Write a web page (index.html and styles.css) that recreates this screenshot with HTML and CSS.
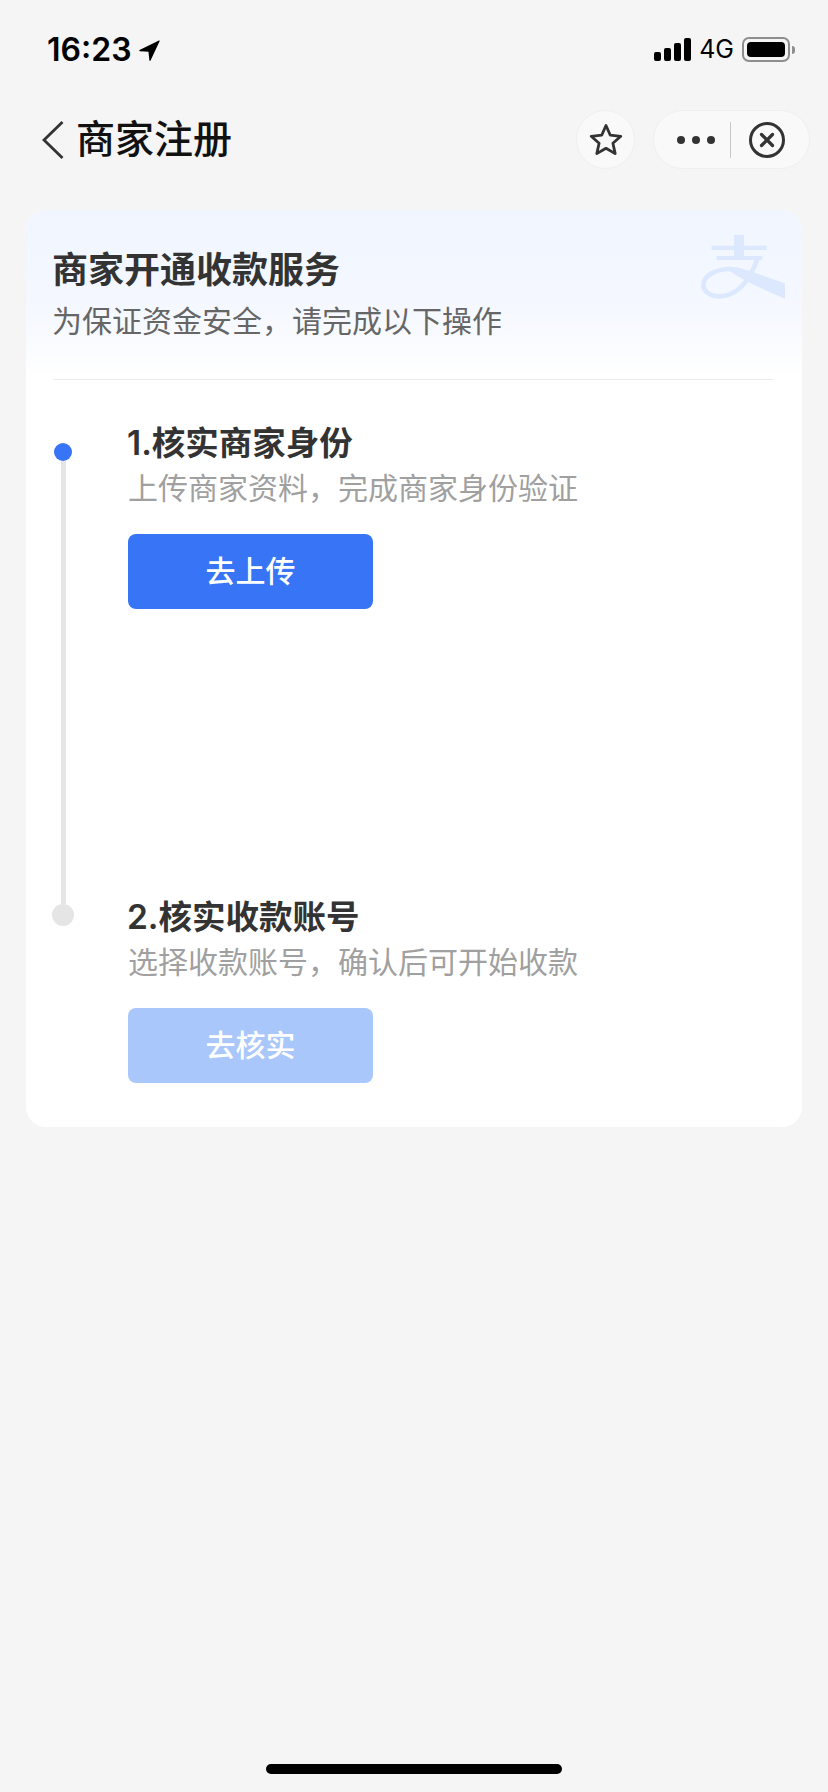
FILE: index.html
```html
<!DOCTYPE html>
<html lang="zh-CN">
<head>
  <meta charset="UTF-8"/>
  <meta name="viewport" content="width=device-width, initial-scale=1.0"/>
  <title>商家注册</title>
  <link rel="stylesheet" href="styles.css">
</head>
<body>
  <div class="page">
    <div class="status-bar">
      <div class="status-time">
        <span>16:23</span>
        <svg class="status-arrow" width="21" height="21" viewBox="0 0 20 20"><path d="M0.5 9.5 19 0.5c.5-.2.8.2.6.6L11 19.5c-.3.6-1 .5-1.100-.1L9 11.200 1 10.800c-.8-.1-1-.9-.5-1.300Z" fill="#000"/></svg>
      </div>
      <div class="status-right">
        <div class="signal">
          <i class="bar1"></i><i class="bar2"></i><i class="bar3"></i><i class="bar4"></i>
        </div>
        <span class="network">4G</span>
        <div class="battery"><div class="battery-level"></div></div>
        <div class="battery-nub"></div>
      </div>
    </div>

    <div class="nav-bar">
      <svg class="back-icon" width="22" height="38" viewBox="0 0 22 38"><path d="M20.500 1 2 19l18.500 18" fill="none" stroke="#333" stroke-width="2.800"/></svg>
      <h1 class="nav-title">商家注册</h1>
      <div class="nav-actions">
        <div class="round-btn">
          <svg width="36" height="36" viewBox="0 0 36 36"><path d="M18 3.500l4.300 9.700 10.500 1.100-7.900 7 2.300 10.300L18 26.300 8.800 31.600l2.300-10.300-7.900-7 10.500-1.100Z" fill="none" stroke="#333" stroke-width="2.800" stroke-linejoin="round"/></svg>
        </div>
        <div class="pill-btn">
          <div class="more-dots"><i></i><i></i><i></i></div>
          <div class="pill-sep"></div>
          <svg class="close-icon" width="38" height="38" viewBox="0 0 38 38"><circle cx="19" cy="19" r="16.500" fill="none" stroke="#333" stroke-width="3"/><path d="M13.500 13.500l11 11M24.500 13.500l-11 11" stroke="#333" stroke-width="3.200" stroke-linecap="round"/></svg>
        </div>
      </div>
    </div>

    <div class="card">
      <div class="card-head">
        <svg class="brand-mark" width="84" height="64" viewBox="298 105 252 192">
          <path d="M397 105h30v32h68v13h-68v18h55v12h-137v-12h52v-18h-67v-13h67Z" fill="#dce8fd"/>
          <path d="M468 175C445 240 410 289 352 289 322 289 305 272 305 255 305 226 345 207 385 207" fill="none" stroke="#dce8fd" stroke-width="14"/>
          <path d="M385 200C415 200 450 215 550 250V297C480 265 430 245 385 214Z" fill="#dce8fd"/>
        </svg>
        <h2 class="card-title">商家开通收款服务</h2>
        <p class="card-sub">为保证资金安全，请完成以下操作</p>
      </div>

      <div class="timeline">
        <div class="rail">
          <div class="dot dot-on"></div>
          <div class="rail-line"></div>
          <div class="dot dot-off"></div>
        </div>
        <div class="steps">
          <div class="step step-first">
            <div class="step-title">1.核实商家身份</div>
            <div class="step-desc">上传商家资料，完成商家身份验证</div>
            <button class="step-btn">去上传</button>
          </div>
          <div class="step">
            <div class="step-title">2.核实收款账号</div>
            <div class="step-desc">选择收款账号，确认后可开始收款</div>
            <button class="step-btn step-btn-off">去核实</button>
          </div>
        </div>
      </div>
    </div>

    <div class="home-indicator"></div>
  </div>
</body>
</html>
```

FILE: styles.css
```css
* {
  box-sizing: border-box;
}

body {
  margin: 0;
  background: #f5f5f5;
  font-family: Inter, 'Noto Sans CJK SC', sans-serif;
}

.page {
  height: 1792px;
  display: flex;
  flex-direction: column;
}

/* status bar */
.status-bar {
  height: 98px;
  padding: 37px 33px 0 47px;
  display: flex;
  justify-content: space-between;
  align-items: flex-start;
}

.status-time {
  display: flex;
  align-items: center;
  gap: 7px;
  height: 25px;
  font-size: 32px;
  font-weight: 600;
  color: #000;
}

.status-arrow {
  margin-top: 1px;
}

.status-right {
  display: flex;
  align-items: center;
  height: 25px;
}

.signal {
  display: flex;
  align-items: flex-end;
  gap: 3px;
  height: 23px;
  margin-right: 8px;
}

.signal i {
  display: block;
  width: 7px;
  background: #000;
  border-radius: 2px;
}

.bar1 { height: 9px; }
.bar2 { height: 13px; }
.bar3 { height: 18px; }
.bar4 { height: 23px; }

.network {
  font-size: 25px;
  color: #000;
  margin-right: 8px;
  line-height: 25px;
}

.battery {
  width: 48px;
  height: 25px;
  padding: 3px;
  border: 2px solid #8e8e8e;
  border-radius: 7px;
}

.battery-level {
  height: 100%;
  background: #000;
  border-radius: 4px;
}

.battery-nub {
  width: 3px;
  height: 8px;
  margin-left: 2px;
  background: #8e8e8e;
  border-radius: 0 3px 3px 0;
}

/* nav */
.nav-bar {
  height: 112px;
  padding: 12px 18px 0 42px;
  display: flex;
  align-items: flex-start;
}

.back-icon {
  margin-top: 11px;
}

.nav-title {
  margin: 7px 0 0 12px;
  font-size: 39px;
  font-weight: 500;
  line-height: 44px;
  color: #111;
}

.nav-actions {
  margin-left: auto;
  display: flex;
  gap: 18px;
}

.round-btn,
.pill-btn {
  height: 59px;
  background: #f9f9f9;
  border: 1px solid #efefef;
  border-radius: 30px;
  display: flex;
  align-items: center;
}

.round-btn {
  width: 59px;
  justify-content: center;
}

.pill-btn {
  width: 157px;
  padding-left: 23px;
}

.more-dots {
  display: flex;
  gap: 7px;
}

.more-dots i {
  display: block;
  width: 8px;
  height: 8px;
  background: #333;
  border-radius: 50%;
}

.pill-sep {
  width: 1px;
  height: 36px;
  margin-left: 15px;
  background: #c8c8c8;
}

.close-icon {
  margin-left: 17px;
}

/* card */
.card {
  margin: 0 26px;
  height: 917px;
  background: #fff;
  border-radius: 20px;
  overflow: hidden;
}

.card-head {
  position: relative;
  height: 170px;
  padding: 35px 26px 0;
  background: linear-gradient(#f0f5ff, #f5f8ff 60%, #fff);
}

.card-head::after {
  content: "";
  position: absolute;
  left: 27px;
  right: 28px;
  bottom: 0;
  height: 1px;
  background: #ececec;
}

.brand-mark {
  position: absolute;
  top: 25px;
  right: 17px;
}

.card-title {
  margin: 0;
  font-size: 36px;
  font-weight: 600;
  line-height: 50px;
  color: #333;
}

.card-sub {
  margin: 6px 0 0;
  font-size: 30px;
  line-height: 40px;
  color: #666;
}

/* timeline */
.timeline {
  display: flex;
}

.rail {
  width: 102px;
  height: 483px;
  margin-top: 63px;
  padding-right: 28px;
  display: flex;
  flex-direction: column;
  align-items: center;
  flex-shrink: 0;
}

.dot {
  border-radius: 50%;
  flex-shrink: 0;
}

.dot-on {
  width: 18px;
  height: 18px;
  background: #3875f6;
}

.dot-off {
  width: 22px;
  height: 22px;
  background: #e5e5e5;
}

.rail-line {
  width: 5px;
  flex: 1;
  background: #e5e5e5;
}

.steps {
  display: flex;
  flex-direction: column;
}

.step {
  padding-top: 41px;
}

.step-first {
  height: 474px;
}

.step-title {
  margin-left: -1px;
  font-size: 33.500px;
  font-weight: 600;
  line-height: 44px;
  color: #333;
}

.step-desc {
  margin-top: 3px;
  font-size: 30px;
  line-height: 40px;
  color: #a0a0a0;
}

.step-btn {
  display: block;
  width: 245px;
  height: 75px;
  margin-top: 26px;
  padding: 0 0 5px;
  border: none;
  border-radius: 8px;
  background: #3875f6;
  color: #fff;
  font-family: inherit;
  font-size: 30px;
  font-weight: 500;
}

.step-btn-off {
  background: #a9c7fb;
}

.home-indicator {
  width: 296px;
  height: 10px;
  margin: auto auto 18px;
  background: #000;
  border-radius: 5px;
}
```
